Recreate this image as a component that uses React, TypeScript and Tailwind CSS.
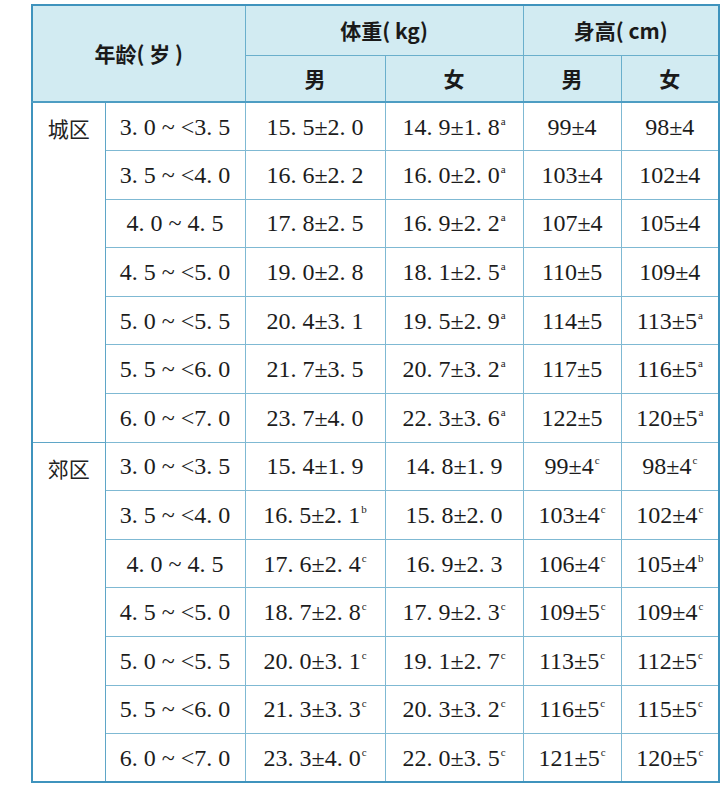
type Cell = { v: string; s?: string };

type Row = { age: string; wm: Cell; wf: Cell; hm: Cell; hf: Cell };

const urban: Row[] = [
  { age: '3. 0 ~ <3. 5', wm: { v: '15. 5±2. 0' }, wf: { v: '14. 9±1. 8', s: 'a' }, hm: { v: '99±4' }, hf: { v: '98±4' } },
  { age: '3. 5 ~ <4. 0', wm: { v: '16. 6±2. 2' }, wf: { v: '16. 0±2. 0', s: 'a' }, hm: { v: '103±4' }, hf: { v: '102±4' } },
  { age: '4. 0 ~ 4. 5', wm: { v: '17. 8±2. 5' }, wf: { v: '16. 9±2. 2', s: 'a' }, hm: { v: '107±4' }, hf: { v: '105±4' } },
  { age: '4. 5 ~ <5. 0', wm: { v: '19. 0±2. 8' }, wf: { v: '18. 1±2. 5', s: 'a' }, hm: { v: '110±5' }, hf: { v: '109±4' } },
  { age: '5. 0 ~ <5. 5', wm: { v: '20. 4±3. 1' }, wf: { v: '19. 5±2. 9', s: 'a' }, hm: { v: '114±5' }, hf: { v: '113±5', s: 'a' } },
  { age: '5. 5 ~ <6. 0', wm: { v: '21. 7±3. 5' }, wf: { v: '20. 7±3. 2', s: 'a' }, hm: { v: '117±5' }, hf: { v: '116±5', s: 'a' } },
  { age: '6. 0 ~ <7. 0', wm: { v: '23. 7±4. 0' }, wf: { v: '22. 3±3. 6', s: 'a' }, hm: { v: '122±5' }, hf: { v: '120±5', s: 'a' } },
];

const suburb: Row[] = [
  { age: '3. 0 ~ <3. 5', wm: { v: '15. 4±1. 9' }, wf: { v: '14. 8±1. 9' }, hm: { v: '99±4', s: 'c' }, hf: { v: '98±4', s: 'c' } },
  { age: '3. 5 ~ <4. 0', wm: { v: '16. 5±2. 1', s: 'b' }, wf: { v: '15. 8±2. 0' }, hm: { v: '103±4', s: 'c' }, hf: { v: '102±4', s: 'c' } },
  { age: '4. 0 ~ 4. 5', wm: { v: '17. 6±2. 4', s: 'c' }, wf: { v: '16. 9±2. 3' }, hm: { v: '106±4', s: 'c' }, hf: { v: '105±4', s: 'b' } },
  { age: '4. 5 ~ <5. 0', wm: { v: '18. 7±2. 8', s: 'c' }, wf: { v: '17. 9±2. 3', s: 'c' }, hm: { v: '109±5', s: 'c' }, hf: { v: '109±4', s: 'c' } },
  { age: '5. 0 ~ <5. 5', wm: { v: '20. 0±3. 1', s: 'c' }, wf: { v: '19. 1±2. 7', s: 'c' }, hm: { v: '113±5', s: 'c' }, hf: { v: '112±5', s: 'c' } },
  { age: '5. 5 ~ <6. 0', wm: { v: '21. 3±3. 3', s: 'c' }, wf: { v: '20. 3±3. 2', s: 'c' }, hm: { v: '116±5', s: 'c' }, hf: { v: '115±5', s: 'c' } },
  { age: '6. 0 ~ <7. 0', wm: { v: '23. 3±4. 0', s: 'c' }, wf: { v: '22. 0±3. 5', s: 'c' }, hm: { v: '121±5', s: 'c' }, hf: { v: '120±5', s: 'c' } },
];

const td =
  "border border-[#7fb9d3] text-center align-middle p-0 whitespace-nowrap font-['Liberation_Serif',serif] text-[24px] text-[#1c1c1c]";
const th =
  "border border-[#6aafcc] text-center align-middle p-0 font-bold text-[21px] text-[#1a1a1a] whitespace-nowrap font-['Noto_Sans_CJK_SC',sans-serif]";

function Value({ c }: { c: Cell }) {
  return (
    <td className={td}>
      {c.v}
      {c.s && <sup className="text-[11px] relative -top-[10px] ml-[1px]">{c.s}</sup>}
    </td>
  );
}

function Group({ name, rows }: { name: string; rows: Row[] }) {
  return (
    <>
      {rows.map((r, i) => (
        <tr key={r.age} className="h-[48.6px]">
          {i === 0 && (
            <td
              rowSpan={rows.length}
              className="border border-[#5fa6c7] align-top text-center pt-[10px] text-[21px] font-['Noto_Sans_CJK_SC',sans-serif] text-[#222]"
            >
              {name}
            </td>
          )}
          <td className={td}>{r.age}</td>
          <Value c={r.wm} />
          <Value c={r.wf} />
          <Value c={r.hm} />
          <Value c={r.hf} />
        </tr>
      ))}
    </>
  );
}

export default function App() {
  return (
    <div className="w-[720px] h-[800px] bg-white overflow-hidden pl-[31px] pt-[4px]">
      <table className="table-fixed border-collapse border-2 border-[#3f93bd] w-[687px]">
        <colgroup>
          <col className="w-[73px]" />
          <col className="w-[140px]" />
          <col className="w-[140px]" />
          <col className="w-[138px]" />
          <col className="w-[98px]" />
          <col className="w-[98px]" />
        </colgroup>
        <thead className="bg-[#d2ebf2]">
          <tr className="h-[50px]">
            <th colSpan={2} rowSpan={2} className={`${th} border-b-2 border-b-[#4d9dc3]`}>
              年龄( 岁 )
            </th>
            <th colSpan={2} className={th}>
              体重( kg)
            </th>
            <th colSpan={2} className={th}>
              身高( cm)
            </th>
          </tr>
          <tr className="h-[47px]">
            <th className={`${th} border-b-2 border-b-[#4d9dc3]`}>男</th>
            <th className={`${th} border-b-2 border-b-[#4d9dc3]`}>女</th>
            <th className={`${th} border-b-2 border-b-[#4d9dc3]`}>男</th>
            <th className={`${th} border-b-2 border-b-[#4d9dc3]`}>女</th>
          </tr>
        </thead>
        <tbody>
          <Group name="城区" rows={urban} />
          <Group name="郊区" rows={suburb} />
        </tbody>
      </table>
    </div>
  );
}
